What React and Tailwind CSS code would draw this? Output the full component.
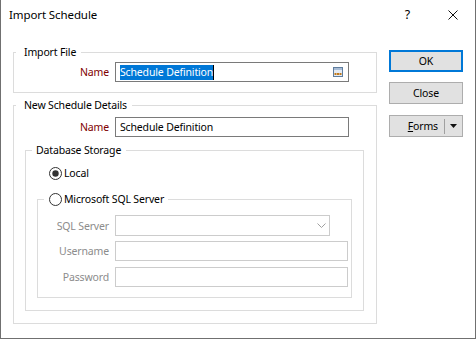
function Radio({ checked }) {
  return (
    <svg width="13" height="13" viewBox="0 0 13 13" className="shrink-0">
      <circle cx="6.5" cy="6.5" r="6" fill="white" stroke="#333333" strokeWidth="1" />
      {checked && <circle cx="6.5" cy="6.5" r="3.2" fill="#333333" />}
    </svg>
  );
}

function BrowseIcon() {
  return (
    <svg width="10" height="10" viewBox="0 0 10 10" className="shrink-0">
      <rect x="0.5" y="0.5" width="9" height="9" fill="#e4ebf4" stroke="#5f7d9e" />
      <rect x="1" y="1" width="8" height="2" fill="#a9bdd6" />
      <rect x="1.5" y="6" width="2" height="2" fill="#c27a1b" />
      <rect x="4" y="6" width="2" height="2" fill="#c27a1b" />
      <rect x="6.5" y="6" width="2" height="2" fill="#c27a1b" />
    </svg>
  );
}

export default function App() {
  return (
    <div className="w-[476px] h-[339px] bg-white border-l border-r border-b border-[#707070] font-['Noto_Sans',sans-serif] text-[10.5px] tracking-[-0.15px] leading-[16px] text-black flex flex-col overflow-hidden">
      {/* Title bar */}
      <div className="h-[30px] shrink-0 flex items-center">
        <div className="pl-[8px] flex-1 text-[11.5px] tracking-[-0.1px]">Import Schedule</div>
        <div className="mr-[38px] text-[12.5px]">?</div>
        <svg width="10" height="10" viewBox="0 0 10 10" className="mr-[17px]">
          <path d="M0.5 0.5 L9.5 9.5 M9.5 0.5 L0.5 9.5" stroke="#111" strokeWidth="1" />
        </svg>
      </div>

      {/* Body */}
      <div className="flex items-start pl-[12px]">
        <div className="w-[364px] mt-[22px] flex flex-col">
          {/* Import File */}
          <div className="relative border border-[#dcdcdc] pt-[9px] pb-[10px]">
            <span className="absolute -top-[9px] left-[2px] bg-white pl-[8px] pr-[5px] leading-[16px]">
              Import File
            </span>
            <div className="flex items-center">
              <div className="w-[101px] text-right pr-[6px] text-[#800000]">Name</div>
              <div className="w-[234px] h-[20px] border border-[#7a7a7a] flex items-center pl-[4px]">
                <span className="bg-[#0078d7] text-white leading-[15px]">Schedule Definition</span>
                <span className="w-[1px] h-[15px] bg-black" />
                <span className="ml-auto mr-[5px] flex">
                  <BrowseIcon />
                </span>
              </div>
            </div>
          </div>

          {/* New Schedule Details */}
          <div className="relative mt-[12px] border border-[#dcdcdc] pt-[11px] pb-[12px]">
            <span className="absolute -top-[9px] left-[2px] bg-white pl-[8px] pr-[5px] leading-[16px]">
              New Schedule Details
            </span>
            <div className="flex items-center">
              <div className="w-[101px] text-right pr-[6px] text-[#800000]">Name</div>
              <div className="w-[234px] h-[20px] border border-[#7a7a7a] flex items-center pl-[4px]">
                Schedule Definition
              </div>
            </div>

            {/* Database Storage */}
            <div className="relative mt-[13px] ml-[11px] mr-[12px] border border-[#dcdcdc] pt-[14px] pb-[12px]">
              <span className="absolute -top-[9px] left-[6px] bg-white pl-[4px] pr-[5px] leading-[16px]">
                Database Storage
              </span>
              <div className="h-[16px] flex items-center pl-[23px]">
                <Radio checked />
                <span className="ml-[2px]">Local</span>
              </div>

              {/* SQL Server group */}
              <div className="relative mt-[18px] ml-[11px] mr-[11px] border border-[#dcdcdc] pt-[15px] pb-[10px]">
                <div className="absolute -top-[9px] left-[6px] h-[16px] bg-white pl-[5px] pr-[4px] flex items-center">
                  <Radio />
                  <span className="ml-[2px]">Microsoft SQL Server</span>
                </div>
                <div className="flex items-center">
                  <div className="w-[77px] text-right pr-[6px] text-[#8c8c8c]">SQL Server</div>
                  <div className="w-[215px] h-[21px] border border-[#cccccc] flex items-center justify-end pr-[3px]">
                    <svg width="9" height="5" viewBox="0 0 9 5">
                      <path d="M0.5 0.5 L4.5 4.5 L8.5 0.5" fill="none" stroke="#a0a0a0" strokeWidth="1" />
                    </svg>
                  </div>
                </div>
                <div className="flex items-center mt-[5px]">
                  <div className="w-[77px] text-right pr-[6px] text-[#8c8c8c]">Username</div>
                  <div className="w-[233px] h-[20px] border border-[#cccccc]" />
                </div>
                <div className="flex items-center mt-[6px]">
                  <div className="w-[77px] text-right pr-[6px] text-[#8c8c8c]">Password</div>
                  <div className="w-[233px] h-[20px] border border-[#cccccc]" />
                </div>
              </div>
            </div>
          </div>
        </div>

        {/* Buttons */}
        <div className="ml-[12px] w-[74px] mt-[20px] flex flex-col">
          <div className="h-[22px] border-2 border-[#0078d7] bg-[#e1e1e1] flex items-center justify-center">
            OK
          </div>
          <div className="mt-[10px] h-[22px] border border-[#adadad] bg-[#e1e1e1] flex items-center justify-center">
            Close
          </div>
          <div className="mt-[11px] h-[22px] border border-[#adadad] bg-[#e1e1e1] flex items-center">
            <div className="w-[54px] flex justify-end pr-[6px]">
              <span>
                <span className="underline">F</span>orms
              </span>
            </div>
            <div className="w-[1px] h-[15px] bg-[#a0a0a0]" />
            <div className="flex-1 flex justify-center">
              <svg width="7" height="4" viewBox="0 0 7 4">
                <path d="M0 0 L7 0 L3.5 4 Z" fill="#111" />
              </svg>
            </div>
          </div>
        </div>
      </div>
    </div>
  );
}
